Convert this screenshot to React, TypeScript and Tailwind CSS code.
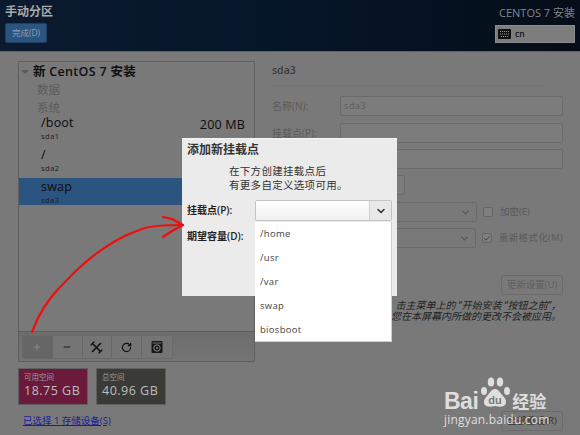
import React from 'react';
import { ChevronDown, Check, Plus, Minus, RotateCw } from 'lucide-react';

const FONT = { fontFamily: '"Open Sans", "Noto Sans CJK SC", sans-serif' };

// one mount point row in the left list
const MountRow = ({ path, dev, size, selected }: { path: string; dev: string; size?: string; selected?: boolean }) => (
  <div className={`pl-[22px] pr-[9px] pt-[1px] ${selected ? 'h-[27px] bg-[#2b5480]' : 'h-[32px]'}`}>
    <div className="flex items-center justify-between h-[16px] text-[12.5px] tracking-[0.2px] text-[#0c0c0c]">
      <span>{path}</span>
      {size && <span className="mt-[4px] text-[12.5px]">{size}</span>}
    </div>
    <div className="text-[7.5px] leading-[10px] tracking-[0.5px] text-[#1c1c1c]">{dev}</div>
  </div>
);

const FieldRow = ({ label, value, width = 'w-[223px]', mt = 'mt-[7px]' }: { label?: string; value?: string; width?: string; mt?: string }) => (
  <div className={`flex items-center ${mt}`}>
    <span className="w-[68px] text-[10px] text-[#5a5a5a]">{label}</span>
    <div className={`${width} h-[20px] border border-[#6b6b6b] rounded-[2px] bg-[#7c7c7c] px-[3px] text-[9px] leading-[18px] tracking-[0.6px] text-[#5c5c5c]`}>
      {value}
    </div>
  </div>
);

const ToolBtn = ({ children, active }: { children: React.ReactNode; active?: boolean }) => (
  <div className={`w-[30px] h-full flex items-center justify-center border-r border-[#666] last:border-r-0 ${active ? 'bg-[#666]' : 'bg-[#757575]'}`}>
    {children}
  </div>
);

const SpaceCard = ({ title, value, bg }: { title: string; value: string; bg: string }) => (
  <div className={`w-[70px] h-[37px] border border-[#5f5f5f] pl-[5px] pt-[3px] ${bg}`}>
    <div className="text-[7.5px] leading-[11px] text-[#9a9a9a]">{title}</div>
    <div className="text-[12.5px] leading-[15px] tracking-[0.5px] text-[#bdbdbd] whitespace-nowrap">{value}</div>
  </div>
);

const App: React.FC = () => {
  return (
    <div className="relative w-[580px] h-[435px] overflow-hidden bg-[#797979]" style={FONT}>
      {/* Header */}
      <header className="h-[52px] bg-gradient-to-r from-[#0b1a2e] via-[#061629] to-[#050d18] border-b border-[#5f6265] flex justify-between">
        <div className="pl-[5px] pt-[3px]">
          <div className="text-[12px] leading-[17px] font-semibold text-[#a9a9a9]">手动分区</div>
          <div className="mt-[3px] w-[42px] h-[20px] rounded-[2px] bg-[#2b5480] border border-[#203f60] text-[8.5px] leading-[18px] text-center text-[#8ba0b5]">
            完成(D)
          </div>
        </div>
        <div className="pr-[5px] pt-[6px] w-[85px]">
          <div className="text-[11px] leading-[14px] text-[#7f868c] whitespace-nowrap text-right">CENTOS 7 安装</div>
          <div className="mt-[5px] h-[18px] bg-[#7d7d7d] border border-[#8b8b8b] flex items-center pl-[2px] gap-[4px]">
            <svg width="13" height="10" viewBox="0 0 13 10">
              <rect width="13" height="10" rx="1" fill="#111" />
              <path d="M2 2.5h9M2 5h9M3 7.5h7" stroke="#999" strokeWidth="1" strokeDasharray="1 1" />
            </svg>
            <span className="text-[8.5px] font-semibold text-[#111]">cn</span>
          </div>
        </div>
      </header>

      {/* Main */}
      <main className="flex">
        <div className="ml-[18px] mt-[9px] w-[237px]">
          <div className="h-[301px] border border-[#5f5f5f] rounded-[1px] flex flex-col">
            <div className="flex-1 pt-[1px]">
              <div className="flex items-center h-[18px] pl-[2px] gap-[4px] text-[12.5px] font-semibold tracking-[0.3px] text-[#0f0f0f]">
                <span className="w-0 h-0 border-x-[4px] border-x-transparent border-t-[4px] border-t-[#5a5a5a]" />
                <span>新 CentOS 7 安装</span>
              </div>
              <div className="pl-[18px] text-[11.5px] leading-[18px] text-[#5c5c5c]">数据</div>
              <div className="pl-[18px] text-[11.5px] leading-[18px] mb-[-3px] text-[#5c5c5c]">系统</div>
              <MountRow path="/boot" dev="sda1" size="200 MB" />
              <MountRow path="/" dev="sda2" />
              <MountRow path="swap" dev="sda3" selected />
            </div>
            <div className="h-[30px] bg-gradient-to-b from-[#6d6d6d] to-[#747474] border-t border-[#5f5f5f] px-[3px] py-[3px]">
              <div className="flex h-[24px] w-[151px] rounded-[2px] overflow-hidden border border-[#6a6a6a]">
                <ToolBtn active><Plus size={10} strokeWidth={2} color="#8f8f8f" /></ToolBtn>
                <ToolBtn><Minus size={10} strokeWidth={2.5} color="#1c1c1c" /></ToolBtn>
                <ToolBtn>
                  <svg width="13" height="13" viewBox="0 0 13 13" fill="none" stroke="#111" strokeWidth="1.6" strokeLinecap="round">
                    <path d="M2.5 2.5l8 8M10.5 2.5l-8 8" />
                    <path d="M1 4l3-3M9 12l3-3" strokeWidth="1.2" />
                  </svg>
                </ToolBtn>
                <ToolBtn><RotateCw size={11} strokeWidth={2.6} color="#111" /></ToolBtn>
                <ToolBtn>
                  <svg width="12" height="12" viewBox="0 0 12 12">
                    <rect width="11" height="12" x="0.5" rx="1" fill="#161616" />
                    <circle cx="6" cy="7" r="3.2" fill="none" stroke="#8a8a8a" strokeWidth="1" />
                    <circle cx="6" cy="7" r="1" fill="#8a8a8a" />
                    <path d="M1.5 2h9" stroke="#8a8a8a" strokeWidth="0.8" />
                  </svg>
                </ToolBtn>
              </div>
            </div>
          </div>
          <div className="flex gap-[8px] mt-[6px]">
            <SpaceCard title="可用空间" value="18.75 GB" bg="bg-[#6b1a3c]" />
            <SpaceCard title="总空间" value="40.96 GB" bg="bg-[#3a3a36]" />
          </div>
          <div className="mt-[10px] ml-[5px] text-[9.5px] leading-[12px] underline text-[#1c1c9c]">已选择 1 存储设备(S)</div>
        </div>

        <div className="ml-[17px] mt-[9px] w-[291px] flex flex-col">
          <div className="text-[10.5px] leading-[16px] mt-[1px] font-semibold text-[#3c3c3c]">sda3</div>
          <div className="mt-[7px] h-px w-[273px] bg-[#747474]" />
          <FieldRow label="名称(N):" value="sda3" mt="mt-[10px]" />
          <FieldRow label="挂载点(P):" />
          <FieldRow mt="mt-[6px]" />
          <FieldRow width="w-[65px]" mt="mt-[6px]" />
          <div className="flex items-center mt-[7px]">
            <div className="ml-[68px] w-[137px] h-[20px] border border-[#6b6b6b] rounded-[2px] flex items-center justify-end pr-[5px]">
              <ChevronDown size={11} color="#555" strokeWidth={2.5} />
            </div>
            <span className="ml-[6px] w-[10px] h-[10px] border border-[#666] rounded-[2px] bg-[#7f7f7f]" />
            <span className="ml-[7px] text-[9.5px] text-[#5a5a5a]">加密(E)</span>
          </div>
          <div className="flex items-center mt-[6px]">
            <div className="ml-[68px] w-[137px] h-[20px] border border-[#6b6b6b] rounded-[2px] flex items-center justify-end pr-[5px]">
              <ChevronDown size={11} color="#555" strokeWidth={2.5} />
            </div>
            <span className="ml-[6px] w-[10px] h-[10px] border border-[#666] rounded-[2px] bg-[#7f7f7f] flex items-center justify-center">
              <Check size={9} strokeWidth={3} color="#444" />
            </span>
            <span className="ml-[7px] text-[9.5px] tracking-[0.3px] text-[#5a5a5a] whitespace-nowrap">重新格式化(M)</span>
          </div>
          <div className="mt-[27px] ml-[229px] w-[62px] h-[20px] border border-[#6b6b6b] rounded-[2px] text-[9.5px] leading-[18px] text-center text-[#5f5f5f]">
            更新设置(U)
          </div>
          <div className="mt-[5px] w-[289px] text-right text-[10px] leading-[11px] italic text-[#222] whitespace-nowrap">
            <div>击主菜单上的 “开始安装 “按钮之前”，</div>
            <div>您在本屏幕内所做的更改不会被应用。</div>
          </div>
          <div className="mt-[89px] ml-[229px] w-[62px] h-[20px] border border-[#6b6b6b] rounded-[2px] text-[9.5px] leading-[18px] text-center text-[#333]">
            全部重设(R)
          </div>
        </div>
      </main>

      {/* Modal */}
      <div className="absolute left-[182px] top-[138px] w-[215px] h-[158px] bg-[#ebebeb] border-t border-[#f5f5f5] pl-[5px] pt-[2px]">
        <div className="text-[12px] leading-[18px] font-semibold text-[#333]">添加新挂载点</div>
        <div className="ml-[42px] mt-[5px] text-[10.5px] leading-[14px] tracking-[0.3px] text-[#333]">
          <div>在下方创建挂载点后</div>
          <div>有更多自定义选项可用。</div>
        </div>
        <div className="flex items-center mt-[8px]">
          <span className="w-[68px] text-[10px] font-semibold text-[#222]">挂载点(P):</span>
          <div className="w-[137px] h-[21px] border border-[#c4c4c4] rounded-[2px] bg-gradient-to-b from-[#fff] to-[#f0f0f0] flex justify-end">
            <div className="w-[22px] bg-[#e8e8e8] border-l border-[#d0d0d0] flex items-center justify-center">
              <ChevronDown size={12} strokeWidth={3} color="#333" />
            </div>
          </div>
        </div>
        <div className="mt-[8px] text-[10px] font-semibold text-[#222]">期望容量(D):</div>
      </div>

      {/* Dropdown */}
      <div className="absolute left-[255px] top-[222px] w-[137px] h-[120px] bg-white border-b border-r border-[#cfcfcf] pl-[5px] text-[9.5px] text-[#444] tracking-[0.3px]">
        {['/home', '/usr', '/var', 'swap', 'biosboot'].map((item) => (
          <div key={item} className="h-[24px] leading-[24px]">{item}</div>
        ))}
      </div>

      {/* Red arrow */}
      <svg className="absolute left-0 top-0 pointer-events-none" width="580" height="435" fill="none" stroke="#f30c0c" strokeWidth="2.2" strokeLinecap="round" strokeLinejoin="round">
        <path d="M32 332 L38 318 C46 302 55 292 67 280 C78 268 88 260 97 253 C106 247 114 241 123 237 C134 232 142 228 150 227 C160 225 172 225 183 225" />
        <path d="M163 217 L172 219 L183 225 L172 231 L163 237" />
      </svg>

      {/* Watermark */}
      <div className="absolute left-[444px] top-[372px] w-[112px] text-[#dedede]">
        <div className="flex items-end h-[42px]">
          <span className="text-[23px] leading-[26px] font-bold tracking-[-0.5px]" style={{ fontFamily: '"Liberation Sans", sans-serif' }}>Bai</span>
          <svg width="32" height="42" viewBox="0 0 32 42" className="ml-[1px]">
            <g fill="#dedede">
              <ellipse cx="5" cy="19" rx="3" ry="4" />
              <ellipse cx="12" cy="10" rx="3.2" ry="4.5" />
              <ellipse cx="21" cy="10" rx="3.2" ry="4.5" />
              <ellipse cx="28" cy="19" rx="3" ry="4" />
              <path d="M16 17c-4 0-5 4-8 7-3 3-4 6-2 9 2 2 5 2 10 1 5 1 8 1 10-1 2-3 1-6-2-9-3-3-4-7-8-7z" />
            </g>
            <text x="16" y="32" textAnchor="middle" fontSize="11" fontWeight="700" fill="#797979" fontFamily="Liberation Sans, sans-serif">du</text>
          </svg>
          <span className="ml-[1px] text-[17px] leading-[24px] font-semibold">经验</span>
        </div>
        <div className="text-[12px] leading-[14px] mt-[-1px] tracking-[0.2px] whitespace-nowrap">jingyan.baidu.com</div>
      </div>
    </div>
  );
};

export default App;
